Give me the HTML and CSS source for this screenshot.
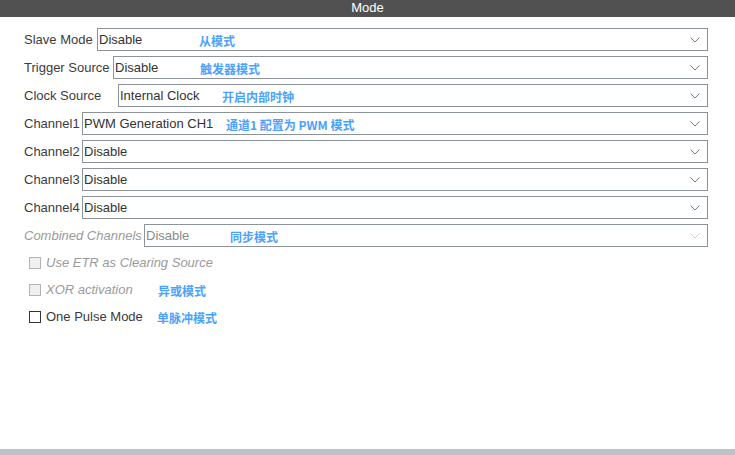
FILE: index.html
```html
<!DOCTYPE html>
<html>
<head>
<meta charset="utf-8">
<link rel="stylesheet" href="styles.css">
</head>
<body>
<div class="header">Mode</div>
<div class="form">
  <div class="row">
    <span class="label w-slave">Slave Mode</span>
    <div class="select"><span class="val">Disable</span><svg class="chev" width="10" height="6" viewBox="0 0 10 6"><polyline points="0.5,0.5 5,5 9.5,0.5" fill="none" stroke="#7a7a7a" stroke-width="1"/></svg></div>
    <span class="note n1">从模式</span>
  </div>
  <div class="row">
    <span class="label w-trigger">Trigger Source</span>
    <div class="select"><span class="val">Disable</span><svg class="chev" width="10" height="6" viewBox="0 0 10 6"><polyline points="0.5,0.5 5,5 9.5,0.5" fill="none" stroke="#7a7a7a" stroke-width="1"/></svg></div>
    <span class="note n2">触发器模式</span>
  </div>
  <div class="row">
    <span class="label w-clock">Clock Source</span>
    <div class="select"><span class="val">Internal Clock</span><svg class="chev" width="10" height="6" viewBox="0 0 10 6"><polyline points="0.5,0.5 5,5 9.5,0.5" fill="none" stroke="#7a7a7a" stroke-width="1"/></svg></div>
    <span class="note n3">开启内部时钟</span>
  </div>
  <div class="row">
    <span class="label w-ch">Channel1</span>
    <div class="select"><span class="val">PWM Generation CH1</span><svg class="chev" width="10" height="6" viewBox="0 0 10 6"><polyline points="0.5,0.5 5,5 9.5,0.5" fill="none" stroke="#7a7a7a" stroke-width="1"/></svg></div>
    <span class="note n4">通道1 配置为 PWM 模式</span>
  </div>
  <div class="row">
    <span class="label w-ch">Channel2</span>
    <div class="select"><span class="val">Disable</span><svg class="chev" width="10" height="6" viewBox="0 0 10 6"><polyline points="0.5,0.5 5,5 9.5,0.5" fill="none" stroke="#7a7a7a" stroke-width="1"/></svg></div>
  </div>
  <div class="row">
    <span class="label w-ch">Channel3</span>
    <div class="select"><span class="val">Disable</span><svg class="chev" width="10" height="6" viewBox="0 0 10 6"><polyline points="0.5,0.5 5,5 9.5,0.5" fill="none" stroke="#7a7a7a" stroke-width="1"/></svg></div>
  </div>
  <div class="row">
    <span class="label w-ch">Channel4</span>
    <div class="select"><span class="val">Disable</span><svg class="chev" width="10" height="6" viewBox="0 0 10 6"><polyline points="0.5,0.5 5,5 9.5,0.5" fill="none" stroke="#7a7a7a" stroke-width="1"/></svg></div>
  </div>
  <div class="row">
    <span class="label w-comb disabled">Combined Channels</span>
    <div class="select is-disabled"><span class="val">Disable</span><svg class="chev" width="10" height="6" viewBox="0 0 10 6"><polyline points="0.5,0.5 5,5 9.5,0.5" fill="none" stroke="#cfcfcf" stroke-width="1"/></svg></div>
    <span class="note n5">同步模式</span>
  </div>
  <div class="checks">
    <div class="check">
      <span class="box box-disabled"></span>
      <span class="clabel disabled">Use ETR as Clearing Source</span>
    </div>
    <div class="check">
      <span class="box box-disabled"></span>
      <span class="clabel disabled">XOR activation</span>
      <span class="note n6">异或模式</span>
    </div>
    <div class="check">
      <span class="box"></span>
      <span class="clabel">One Pulse Mode</span>
      <span class="note n7">单脉冲模式</span>
    </div>
  </div>
</div>
<div class="spacer"></div>
<div class="bottombar"></div>
</body>
</html>
```

FILE: styles.css
```css
html, body {
  margin: 0;
  padding: 0;
  background: #ffffff;
  height: 100%;
}
body {
  font-family: "Liberation Sans", Arial, sans-serif;
  font-size: 13px;
  color: #3a3a3a;
  display: flex;
  flex-direction: column;
  width: 735px;
  height: 455px;
  overflow: hidden;
}
.header {
  height: 17px;
  line-height: 16px;
  background: #505150;
  color: #ffffff;
  text-align: center;
  font-size: 13px;
}
.form {
  padding: 11px 27px 0 24px;
  display: flex;
  flex-direction: column;
  gap: 5px;
}
.row {
  position: relative;
  display: flex;
  align-items: center;
  height: 23px;
}
.label {
  flex: none;
  white-space: nowrap;
  color: #3c3c3c;
}
.w-slave { width: 73px; }
.w-trigger { width: 89px; }
.w-clock { width: 94px; }
.w-ch { width: 58px; }
.w-comb { width: 120px; }
.disabled {
  color: #9a9a9a;
  font-style: italic;
}
.select {
  flex: 1;
  height: 23px;
  box-sizing: border-box;
  border: 1px solid #8c9499;
  display: flex;
  align-items: center;
  justify-content: space-between;
  padding: 0 7px 0 1px;
  color: #333333;
}
.select .val {
  white-space: nowrap;
}
.select.is-disabled {
  color: #8a8a8a;
}
.chev {
  flex: none;
  margin-top: 1px;
}
.note {
  position: absolute;
  top: 50%;
  transform: translateY(-50%);
  margin-top: 1px;
  font-family: "Noto Sans CJK SC", "Liberation Sans", sans-serif;
  font-weight: 700;
  font-size: 12px;
  color: #4aa2ff;
  white-space: nowrap;
  line-height: 14px;
}
.n1 { left: 175px; }
.n2 { left: 176px; }
.n3 { left: 198px; }
.n4 { left: 202px; }
.n5 { left: 206px; }
.n6 { left: 129px; }
.n7 { left: 128px; }
.checks {
  margin-top: 3px;
  display: flex;
  flex-direction: column;
  gap: 12px;
  padding-left: 5px;
}
.check {
  position: relative;
  display: flex;
  align-items: center;
  height: 15px;
}
.box {
  width: 12px;
  height: 12px;
  box-sizing: border-box;
  border: 1px solid #333333;
  background: #ffffff;
  margin-right: 5px;
  flex: none;
}
.box-disabled {
  border-color: #b3b3b3;
  background: #efefef;
}
.clabel {
  white-space: nowrap;
}
.spacer {
  flex: 1;
}
.bottombar {
  height: 6px;
  background: #b8c3ca;
  flex: none;
}
```
